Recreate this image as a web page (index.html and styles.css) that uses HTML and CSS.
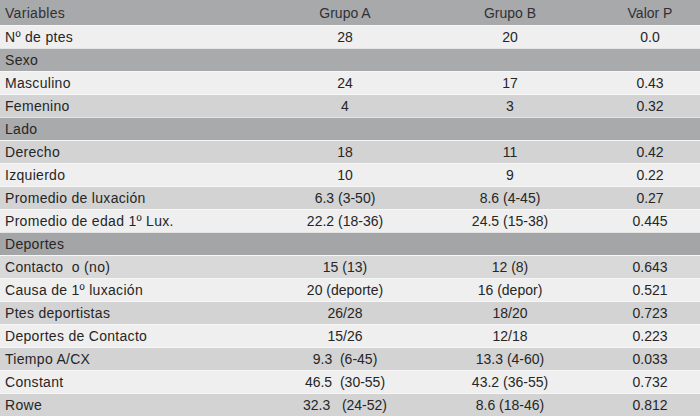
FILE: index.html
```html
<!DOCTYPE html>
<html lang="es">
<head>
<meta charset="utf-8">
<title>Tabla</title>
<link rel="stylesheet" href="styles.css">
</head>
<body>
<table class="data">
  <colgroup>
    <col class="c-var"><col class="c-a"><col class="c-b"><col class="c-p">
  </colgroup>
  <thead>
    <tr class="head"><th class="var">Variables</th><th>Grupo A</th><th class="b">Grupo B</th><th>Valor P</th></tr>
  </thead>
  <tbody>
    <tr class="light"><td class="var">Nº de ptes</td><td>28</td><td class="b">20</td><td>0.0</td></tr>
    <tr class="section"><td class="var">Sexo</td><td></td><td class="b"></td><td></td></tr>
    <tr class="light"><td class="var">Masculino</td><td>24</td><td class="b">17</td><td>0.43</td></tr>
    <tr class="mid"><td class="var">Femenino</td><td>4</td><td class="b">3</td><td>0.32</td></tr>
    <tr class="section"><td class="var">Lado</td><td></td><td class="b"></td><td></td></tr>
    <tr class="mid"><td class="var">Derecho</td><td>18</td><td class="b">11</td><td>0.42</td></tr>
    <tr class="light"><td class="var">Izquierdo</td><td>10</td><td class="b">9</td><td>0.22</td></tr>
    <tr class="mid"><td class="var">Promedio de luxación</td><td>6.3 (3-50)</td><td class="b">8.6 (4-45)</td><td>0.27</td></tr>
    <tr class="light"><td class="var">Promedio de edad 1º Lux.</td><td>22.2 (18-36)</td><td class="b">24.5 (15-38)</td><td>0.445</td></tr>
    <tr class="section dark"><td class="var">Deportes</td><td></td><td class="b"></td><td></td></tr>
    <tr class="mid2"><td class="var">Contacto &nbsp;o (no)</td><td>15 (13)</td><td class="b">12 (8)</td><td>0.643</td></tr>
    <tr class="light"><td class="var">Causa de 1º luxación</td><td>20 (deporte)</td><td class="b">16 (depor)</td><td>0.521</td></tr>
    <tr class="mid"><td class="var">Ptes deportistas</td><td>26/28</td><td class="b">18/20</td><td>0.723</td></tr>
    <tr class="light"><td class="var">Deportes de Contacto</td><td>15/26</td><td class="b">12/18</td><td>0.223</td></tr>
    <tr class="mid"><td class="var">Tiempo A/CX</td><td class="pre">9.3  (6-45)</td><td class="b">13.3 (4-60)</td><td>0.033</td></tr>
    <tr class="light"><td class="var">Constant</td><td class="pre">46.5  (30-55)</td><td class="b">43.2 (36-55)</td><td>0.732</td></tr>
    <tr class="mid"><td class="var">Rowe</td><td class="pre">32.3   (24-52)</td><td class="b">8.6 (18-46)</td><td>0.812</td></tr>
  </tbody>
</table>
</body>
</html>
```
FILE: styles.css
```css
html, body {
  margin: 0;
  padding: 0;
  background: #ffffff;
}
.data {
  width: 700px;
  border-collapse: collapse;
  table-layout: fixed;
  font-family: "Liberation Sans", Arial, sans-serif;
  font-size: 14px;
  color: #262626;
}
.c-var { width: 260px; }
.c-a { width: 170px; }
.c-b { width: 170px; }
.c-p { width: 100px; }
.data th, .data td {
  padding: 0;
  text-align: center;
  font-weight: normal;
  height: 22px;
  line-height: 22px;
  border-top: 1px solid #f7f7f7;
  white-space: nowrap;
}
.data .var {
  text-align: left;
  padding-left: 5px;
  letter-spacing: 0.3px;
}
.data .b {
  padding-right: 10px;
}
.data .pre {
  white-space: pre;
}
.head th {
  height: 25px;
  line-height: 24px;
  border-top: none;
  background: #a8a9ab;
  color: #303033;
}
.light td { background: #efeff0; }
.mid td { background: #d3d3d4; }
.mid2 td { background: #d9d9da; }
.section td {
  background: #a9aaac;
  border-top-color: #e4e4e5;
}
.section.dark td { background: #a4a5a7; }
```
